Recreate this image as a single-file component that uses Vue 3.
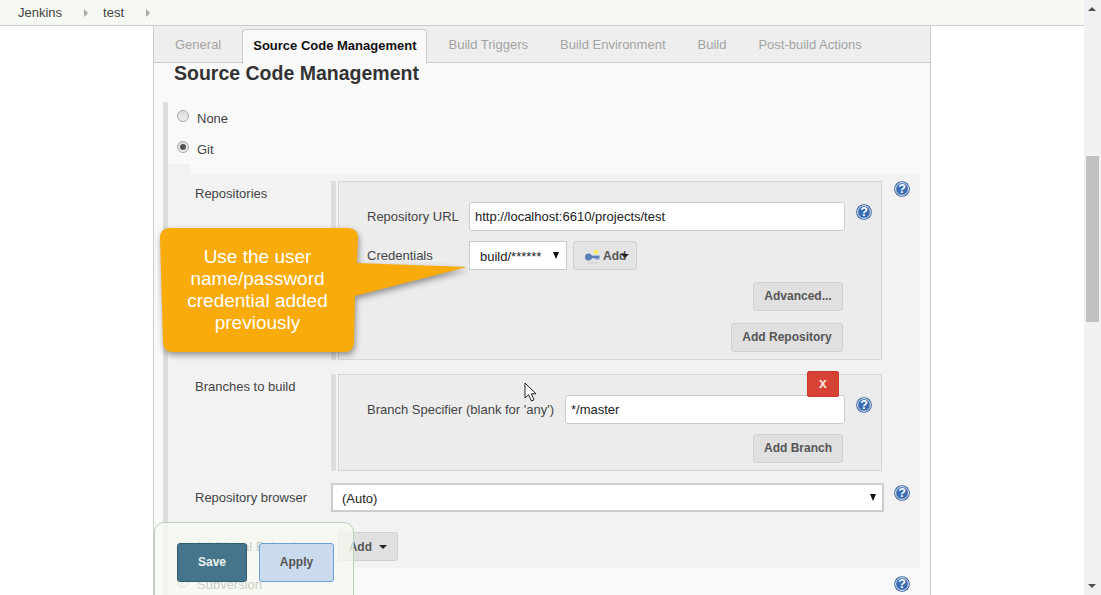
<script setup>
const tabs = [
  { label: 'General' },
  { label: 'Source Code Management', active: true },
  { label: 'Build Triggers' },
  { label: 'Build Environment' },
  { label: 'Build' },
  { label: 'Post-build Actions' }
]
</script>

<template>
  <div class="page">
    <div class="content">
      <div class="crumbs">
        <span>Jenkins</span><i class="crumb-arrow"></i>
        <span>test</span><i class="crumb-arrow"></i>
      </div>

      <div class="panel">
        <div class="tabs">
          <div v-for="t in tabs" :key="t.label" class="tab" :class="{ active: t.active }">{{ t.label }}</div>
        </div>

        <div class="panel-body">
          <h2>Source Code Management</h2>

          <div class="section">
            <label class="radio-row"><span class="radio"></span>None</label>
            <label class="radio-row"><span class="radio checked"></span>Git</label>
            <div class="notch"></div>

            <div class="git-block">
              <div class="label repos-label">Repositories</div>
              <div class="repeated">
                <div class="box repo-box">
                  <div class="field-row">
                    <div class="field-label">Repository URL</div>
                    <input class="text-input url-input" value="http://localhost:6610/projects/test" readonly>
                    <svg class="help inner-help" viewBox="0 0 16 16"><circle cx="8" cy="8" r="7.8" fill="#2c5a9c"/><circle cx="8" cy="8" r="6.4" fill="#3c6cb2" stroke="#fff" stroke-width="0.9"/><text x="8" y="12.4" text-anchor="middle" class="help-q">?</text></svg>
                  </div>
                  <div class="field-row cred-row">
                    <div class="field-label">Credentials</div>
                    <div class="select-wrap cred-select"><select class="select"><option>build/******</option></select></div>
                    <button class="btn add-cred">
                      <svg class="key" viewBox="0 0 16 16"><ellipse cx="9" cy="14.6" rx="6" ry="1" fill="#d4d4d4"/><circle cx="4.5" cy="9" r="3.5" fill="#5a82b8"/><rect x="6" y="7.6" width="9.5" height="2.6" fill="#5a82b8"/><rect x="11" y="10" width="4.5" height="1.4" fill="#7d9cc8"/><circle cx="12" cy="4" r="2.3" fill="#f6ec5c"/></svg>
                      <span>Add</span>
                      <i class="caret cred-caret"></i>
                    </button>
                  </div>
                  <div class="btn-row"><button class="btn wide-adv">Advanced...</button></div>
                  <div class="btn-row"><button class="btn add-repo">Add Repository</button></div>
                </div>
              </div>
              <svg class="help top-help" viewBox="0 0 16 16"><circle cx="8" cy="8" r="7.8" fill="#2c5a9c"/><circle cx="8" cy="8" r="6.4" fill="#3c6cb2" stroke="#fff" stroke-width="0.9"/><text x="8" y="12.4" text-anchor="middle" class="help-q">?</text></svg>

              <div class="label branch-label">Branches to build</div>
              <div class="repeated branch-wrap">
                <div class="box branch-box">
                  <button class="delete">x</button>
                  <div class="field-row branch-row">
                    <div class="field-label">Branch Specifier (blank for 'any')</div>
                    <input class="text-input branch-input" value="*/master" readonly>
                    <svg class="help inner-help" viewBox="0 0 16 16"><circle cx="8" cy="8" r="7.8" fill="#2c5a9c"/><circle cx="8" cy="8" r="6.4" fill="#3c6cb2" stroke="#fff" stroke-width="0.9"/><text x="8" y="12.4" text-anchor="middle" class="help-q">?</text></svg>
                  </div>
                  <div class="btn-row"><button class="btn wide-adv">Add Branch</button></div>
                </div>
              </div>
              <div></div>

              <div class="label browser-label">Repository browser</div>
              <div class="select-wrap browser-select"><select class="select"><option>(Auto)</option></select></div>
              <svg class="help browser-help" viewBox="0 0 16 16"><circle cx="8" cy="8" r="7.8" fill="#2c5a9c"/><circle cx="8" cy="8" r="6.4" fill="#3c6cb2" stroke="#fff" stroke-width="0.9"/><text x="8" y="12.4" text-anchor="middle" class="help-q">?</text></svg>

              <div class="label behaviours-label">Additional Behaviours</div>
              <div class="behaviours"><button class="btn add-behaviour">Add <i class="caret"></i></button></div>
              <div></div>
            </div>

            <label class="radio-row svn-row"><span class="radio"></span>Subversion
              <svg class="help svn-help" viewBox="0 0 16 16"><circle cx="8" cy="8" r="7.8" fill="#2c5a9c"/><circle cx="8" cy="8" r="6.4" fill="#3c6cb2" stroke="#fff" stroke-width="0.9"/><text x="8" y="12.4" text-anchor="middle" class="help-q">?</text></svg>
            </label>
          </div>
        </div>
      </div>
    </div>

    <div class="scrollbar">
      <i class="sb-up"></i>
      <div class="sb-thumb"></div>
      <i class="sb-down"></i>
    </div>

    <div class="save-bar">
      <button class="save">Save</button>
      <button class="apply">Apply</button>
    </div>

    <div class="callout">
      <svg width="320" height="140" viewBox="0 0 320 140">
        <path d="M10 0H188Q198 0 198 10L197 35L307 39L195 68L194 114Q194 124 184 124H13Q3 124 3 114L0 10Q0 0 10 0Z" fill="#f9ab0b"/>
      </svg>
      <div class="callout-text">Use the user<br>name/password<br>credential added<br>previously</div>
    </div>

    <svg class="cursor" width="14" height="21" viewBox="0 0 14 21"><path d="M1 1V16L4.6 12.8L7.4 19L10 17.8L7.3 11.8H12Z" fill="#fff" stroke="#222" stroke-width="1"/></svg>
  </div>
</template>

<style scoped>
.page {
  position: relative;
  display: flex;
  width: 1101px;
  height: 595px;
  overflow: hidden;
  background: #fff;
  font-family: "Liberation Sans", Arial, sans-serif;
  font-size: 13px;
  color: #333;
}
.content { width: 1084px; flex: none; }

.crumbs {
  display: flex;
  align-items: center;
  height: 25px;
  padding-left: 18px;
  background: #f6f9f2;
  border-bottom: 1px solid #ccc;
  color: #444;
  font-size: 13px;
}
.crumb-arrow {
  width: 0;
  height: 0;
  margin: 1px 15px 0 22px;
  border-left: 4px solid #aaa;
  border-top: 4px solid transparent;
  border-bottom: 4px solid transparent;
}

.panel {
  margin-left: 153px;
  width: 778px;
  border-left: 1px solid #ccc;
  border-right: 1px solid #ccc;
  background: #f9f9f9;
  box-sizing: border-box;
}
.tabs {
  display: flex;
  gap: 8px;
  height: 36px;
  padding-left: 9px;
  background: #eee;
  border-bottom: 1px solid #ccc;
}
.tab {
  padding: 0 12px;
  line-height: 37px;
  color: #a3a3a3;
}
.tab.active {
  margin: 3px 2px 0 1px;
  height: 34px;
  padding: 0 9px 0 10px;
  line-height: 31px;
  font-weight: bold;
  color: #111;
  background: #f9f9f9;
  border: 1px solid #ccc;
  border-bottom: none;
  border-radius: 4px 4px 0 0;
}

h2 {
  margin: 0 0 18px 20px;
  font-size: 19.5px;
  line-height: 21px;
  font-weight: bold;
  color: #333;
}

.section {
  margin-left: 9px;
  width: 757px;
  box-sizing: border-box;
  border-left: 5px solid #ddd;
}
.radio-row {
  display: flex;
  align-items: center;
  height: 31px;
  box-sizing: border-box;
  padding: 2px 0 0 9px;
  color: #444;
}
.radio {
  position: relative;
  width: 12px;
  height: 12px;
  margin: -5px 8px 0 0;
  box-sizing: border-box;
  border: 1px solid #aaa;
  border-radius: 50%;
  background: linear-gradient(#ddd, #eee);
}
.radio.checked::after {
  content: "";
  position: absolute;
  inset: 2px;
  border-radius: 50%;
  background: #555;
}
.notch { width: 22px; height: 10px; background: #f2f2f2; }

.git-block {
  display: grid;
  grid-template-columns: 136px 553px 1fr;
  padding: 7px 0 7px 27px;
  background: #f2f2f2;
}
.label { color: #444; }
.repos-label { padding-top: 5px; }
.branch-label { padding-top: 5px; margin-top: 14px; }
.browser-label { margin-top: 12px; line-height: 29px; }
.behaviours-label { margin-top: 20px; line-height: 29px; }

.repeated {
  margin-right: 2px;
  border-left: 5px solid #ddd;
  padding-left: 2px;
}
.branch-wrap { margin-top: 14px; }
.box {
  position: relative;
  width: 544px;
  box-sizing: border-box;
  padding: 20px 0 7px 28px;
  background: #ececec;
  border: 1px solid #d5d5d5;
}
.field-row {
  display: flex;
  align-items: center;
  height: 29px;
  margin-bottom: 10px;
}
.cred-row { margin-bottom: 12px; }
.field-label { width: 102px; flex: none; color: #444; }
.branch-row .field-label { width: 198px; }
.text-input {
  height: 29px;
  padding: 0 5px;
  box-sizing: border-box;
  border: 1px solid #ccc;
  border-radius: 3px;
  background: #fff;
  font: 13px "Liberation Sans", Arial, sans-serif;
  color: #222;
  outline: none;
}
.url-input { width: 376px; }
.branch-input { width: 280px; }
.help { width: 16px; height: 16px; flex: none; }
.help-q { font: bold 12.5px "Liberation Sans", Arial, sans-serif; fill: #fff; }
.inner-help { margin: -9px 0 0 11px; }
.top-help { margin-left: 10px; }
.browser-help { margin: 14px 0 0 10px; }
.svn-help { margin: -2px 10px 0 auto; }

.select-wrap { position: relative; }
.select-wrap::after {
  content: "";
  position: absolute;
  top: 11px;
  right: 8px;
  border-left: 3.5px solid transparent;
  border-right: 3.5px solid transparent;
  border-top: 7px solid #111;
}
.select {
  display: block;
  width: 100%;
  height: 29px;
  padding: 1px 9px 0;
  appearance: none;
  border: 2px solid #ccc;
  border-radius: 0;
  background: #fff;
  font: 13px "Liberation Sans", Arial, sans-serif;
  color: #222;
  outline: none;
}
.cred-select { width: 98px; }
.cred-select .select { border-width: 1px; padding-left: 10px; }
.browser-select { margin-top: 12px; }

.btn {
  height: 29px;
  padding: 0 0 2px;
  border: 1px solid #d0d0d0;
  border-radius: 3px;
  background: #e0e0e0;
  font: bold 12px "Liberation Sans", Arial, sans-serif;
  color: #555;
}
.btn-row {
  display: flex;
  justify-content: flex-end;
  margin: 0 38px 12px 0;
}
.btn-row:last-child { margin-bottom: 0; }
.wide-adv { width: 90px; }
.add-repo { width: 112px; }
.add-cred {
  position: relative;
  display: flex;
  align-items: center;
  width: 64px;
  margin-left: 6px;
  padding: 0 0 0 10px;
  background: #e4e4e4;
}
.key { width: 16px; height: 16px; margin-right: 3px; }
.cred-caret { position: absolute; left: 43px; top: 12px; margin: 0; }
.caret {
  display: inline-block;
  width: 0;
  height: 0;
  margin-left: 4px;
  vertical-align: middle;
  border-left: 4px solid transparent;
  border-right: 4px solid transparent;
  border-top: 4px solid #222;
}
.delete {
  position: absolute;
  top: -4px;
  right: 42px;
  width: 32px;
  height: 26px;
  padding: 0 0 2px;
  border: 1px solid #c53a2d;
  border-radius: 2px;
  background: #d64335;
  font: bold 14px "Liberation Sans", Arial, sans-serif;
  color: #f6e4dc;
}
.behaviours { margin-top: 20px; padding-left: 7px; }
.add-behaviour { width: 60px; padding: 0; }

.scrollbar {
  position: relative;
  width: 17px;
  background: #f1f1f1;
}
.sb-thumb {
  position: absolute;
  top: 156px;
  left: 2px;
  width: 13px;
  height: 166px;
  background: #c1c1c1;
}
.sb-up, .sb-down {
  position: absolute;
  left: 4px;
  border-left: 4px solid transparent;
  border-right: 4px solid transparent;
}
.sb-up { top: 7px; border-bottom: 4px solid #505050; }
.sb-down { bottom: 7px; border-top: 4px solid #505050; }

.save-bar {
  position: absolute;
  left: 154px;
  top: 522px;
  display: flex;
  gap: 12px;
  width: 200px;
  height: 80px;
  box-sizing: border-box;
  padding: 20px 0 0 22px;
  background: rgba(246, 249, 240, 0.75);
  border: 1px solid #b4d2bd;
  border-radius: 10px 10px 0 0;
}
.save, .apply {
  height: 39px;
  padding: 0 0 2px;
  border-radius: 3px;
  font: bold 12px "Liberation Sans", Arial, sans-serif;
}
.save {
  width: 70px;
  background: #44758a;
  border: 1px solid #335e70;
  color: #f1f1f1;
}
.apply {
  width: 75px;
  background: #c9dbec;
  border: 1px solid #6a9fd8;
  color: #555;
}

.callout {
  position: absolute;
  left: 160px;
  top: 228px;
  width: 320px;
  height: 140px;
}
.callout svg {
  display: block;
  filter: drop-shadow(1px 3px 3px rgba(0, 0, 0, 0.4));
}
.callout-text {
  position: absolute;
  left: 0;
  top: 18px;
  width: 195px;
  text-align: center;
  font-size: 19px;
  line-height: 22px;
  color: #fff;
}
.cursor { position: absolute; left: 524px; top: 382px; }
</style>

<style>
html, body { margin: 0; overflow: hidden; }
</style>
